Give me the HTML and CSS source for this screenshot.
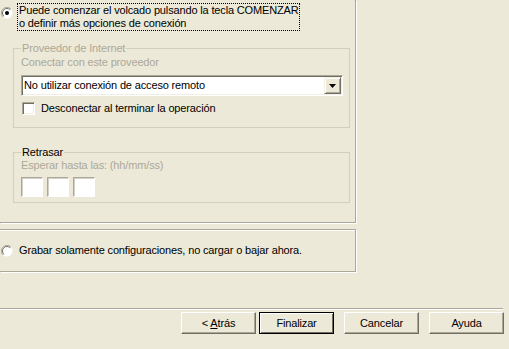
FILE: index.html
```html
<!DOCTYPE html>
<html lang="es">
<head>
  <meta charset="UTF-8" />
  <title>Asistente de volcado</title>
  <link rel="stylesheet" href="styles.css">
</head>
<body>
  <div class="wizard">

    <!-- Opcion 1: volcar ahora -->
    <div class="panel panel-main">
      <div class="choice">
        <span class="radio">
          <svg width="12" height="12" viewBox="0 0 12 12">
            <circle cx="6" cy="6" r="5.5" fill="#fff"/>
            <path d="M10 2 A5.6 5.6 0 0 0 2 10" stroke="#ACA899" fill="none"/>
            <path d="M9.2 2.8 A4.5 4.5 0 0 0 2.8 9.2" stroke="#716F64" fill="none"/>
            <circle cx="6" cy="6" r="2" fill="#000"/>
          </svg>
        </span>
        <label class="choice-text focused">Puede comenzar el volcado pulsando la tecla COMENZAR<br>o definir más opciones de conexión</label>
      </div>

      <fieldset class="group group-isp">
        <legend class="disabled">Proveedor de Internet</legend>
        <div class="field-label disabled">Conectar con este proveedor</div>
        <div class="combo">
          <span class="combo-value">No utilizar conexión de acceso remoto</span>
          <span class="combo-btn">
            <svg width="7" height="4" viewBox="0 0 7 4"><path d="M0 0H7L3.5 4Z" fill="#000"/></svg>
          </span>
        </div>
        <div class="check-row">
          <span class="checkbox"></span>
          <span>Desconectar al terminar la operación</span>
        </div>
      </fieldset>

      <fieldset class="group group-delay">
        <legend>Retrasar</legend>
        <div class="field-label disabled">Esperar hasta las: (hh/mm/ss)</div>
        <div class="time-row">
          <span class="edit"></span>
          <span class="edit"></span>
          <span class="edit"></span>
        </div>
      </fieldset>
    </div>

    <!-- Opcion 2: solo grabar -->
    <div class="panel panel-save">
      <div class="choice">
        <span class="radio">
          <svg width="12" height="12" viewBox="0 0 12 12">
            <circle cx="6" cy="6" r="5.5" fill="#fff"/>
            <path d="M10 2 A5.6 5.6 0 0 0 2 10" stroke="#ACA899" fill="none"/>
            <path d="M9.2 2.8 A4.5 4.5 0 0 0 2.8 9.2" stroke="#716F64" fill="none"/>
          </svg>
        </span>
        <span class="choice-text">Grabar solamente configuraciones, no cargar o bajar ahora.</span>
      </div>
    </div>

    <div class="separator"></div>

    <div class="buttons">
      <button class="btn">&lt; <u>A</u>trás</button>
      <button class="btn btn-default">Finalizar</button>
      <button class="btn btn-cancel">Cancelar</button>
      <button class="btn btn-help">Ayuda</button>
    </div>
  </div>
</body>
</html>
```

FILE: styles.css
```css
* {
  box-sizing: border-box;
}

body {
  margin: 0;
  background: #ECE9D8;
  font-family: 'Liberation Sans', Arial, sans-serif;
  font-size: 11px;
  letter-spacing: -0.15px;
  color: #000;
}

.wizard {
  width: 509px;
  height: 349px;
  display: flex;
  flex-direction: column;
  overflow: hidden;
}

.disabled {
  color: #ACA899;
}

/* Paneles con borde grabado */
.panel-main {
  width: 356px;
  height: 223px;
  flex: none;
  padding-top: 3px;
  border-right: 1px solid #ACA899;
  border-bottom: 1px solid #ACA899;
  box-shadow: 1px 1px 0 #fff;
}

.panel-save {
  width: 356px;
  height: 43px;
  flex: none;
  margin-top: 6px;
  display: flex;
  align-items: center;
  border-top: 1px solid #ACA899;
  border-right: 1px solid #ACA899;
  border-bottom: 1px solid #ACA899;
  box-shadow: inset 0 1px 0 #fff, 1px 1px 0 #fff;
}

/* Radios */
.choice {
  display: flex;
  align-items: flex-start;
}

.panel-save .choice {
  align-items: center;
}

.radio {
  display: block;
  width: 12px;
  height: 12px;
  flex: none;
  margin: 4px 4px 0 1px;
}

.panel-save .radio {
  margin-top: 0;
}

.radio svg {
  display: block;
}

.choice-text {
  line-height: 13px;
  padding: 1px 1px 1px 2px;
}

.focused {
  outline: 1px dotted #000;
  outline-offset: -1px;
}

/* Grupos */
.group {
  margin: 11px 0 0 13px;
  width: 337px;
  min-width: 0;
  border: 1px solid #D0D0BF;
  padding: 0 5px 12px 7px;
}

.group legend {
  padding: 0 1px;
  line-height: 13px;
}

.group-delay {
  margin-top: 18px;
  padding-bottom: 5px;
}

.field-label {
  line-height: 13px;
  margin-top: 1px;
}

.group-delay .field-label {
  margin-top: 0;
}

/* Combo */
.combo {
  margin-top: 6px;
  height: 21px;
  width: 322px;
  display: flex;
  align-items: center;
  background: #fff;
  border: 1px solid;
  border-color: #ACA899 #fff #fff #ACA899;
  box-shadow: inset 1px 1px 0 #716F64, inset -1px -1px 0 #F1EFE2;
  padding: 1px 1px 1px 2px;
}

.combo-value {
  flex: 1;
  line-height: 13px;
}

.combo-btn {
  width: 17px;
  height: 17px;
  display: flex;
  align-items: center;
  justify-content: center;
  background: #ECE9D8;
  border: 1px solid;
  border-color: #F1EFE2 #716F64 #716F64 #F1EFE2;
  box-shadow: inset 1px 1px 0 #fff, inset -1px -1px 0 #ACA899;
}

.combo-btn svg {
  display: block;
}

/* Checkbox */
.check-row {
  margin-top: 6px;
  display: flex;
  align-items: center;
  gap: 6px;
  line-height: 13px;
  padding-left: 1px;
}

.checkbox {
  width: 13px;
  height: 13px;
  flex: none;
  background: #fff;
  border: 1px solid;
  border-color: #ACA899 #fff #fff #ACA899;
  box-shadow: inset 1px 1px 0 #716F64, inset -1px -1px 0 #F1EFE2;
}

/* Campos de hora */
.time-row {
  margin-top: 5px;
  display: flex;
  gap: 4px;
}

.edit {
  width: 22px;
  height: 20px;
  background: #fff;
  border: 1px solid;
  border-color: #ACA899 #fff #fff #ACA899;
  box-shadow: inset 1px 1px 0 #D4D0C8;
}

/* Separador y botones */
.separator {
  margin-top: auto;
  width: 503px;
  height: 2px;
  flex: none;
  border-top: 1px solid #ACA899;
  border-bottom: 1px solid #fff;
}

.buttons {
  margin: 2px 0 15px;
  padding-right: 5px;
  display: flex;
  justify-content: flex-end;
}

.btn {
  width: 75px;
  height: 22px;
  padding: 0;
  font-family: inherit;
  font-size: 11px;
  letter-spacing: inherit;
  color: #000;
  background: #ECE9D8;
  border: 1px solid;
  border-color: #fff #716F64 #716F64 #fff;
  box-shadow: inset -1px -1px 0 #ACA899;
  border-radius: 0;
}

.btn-default {
  margin-left: 3px;
  border-color: #000;
  box-shadow: inset 1px 1px 0 #fff, inset -1px -1px 0 #716F64;
}

.btn-cancel,
.btn-help {
  margin-left: 10px;
}
```
